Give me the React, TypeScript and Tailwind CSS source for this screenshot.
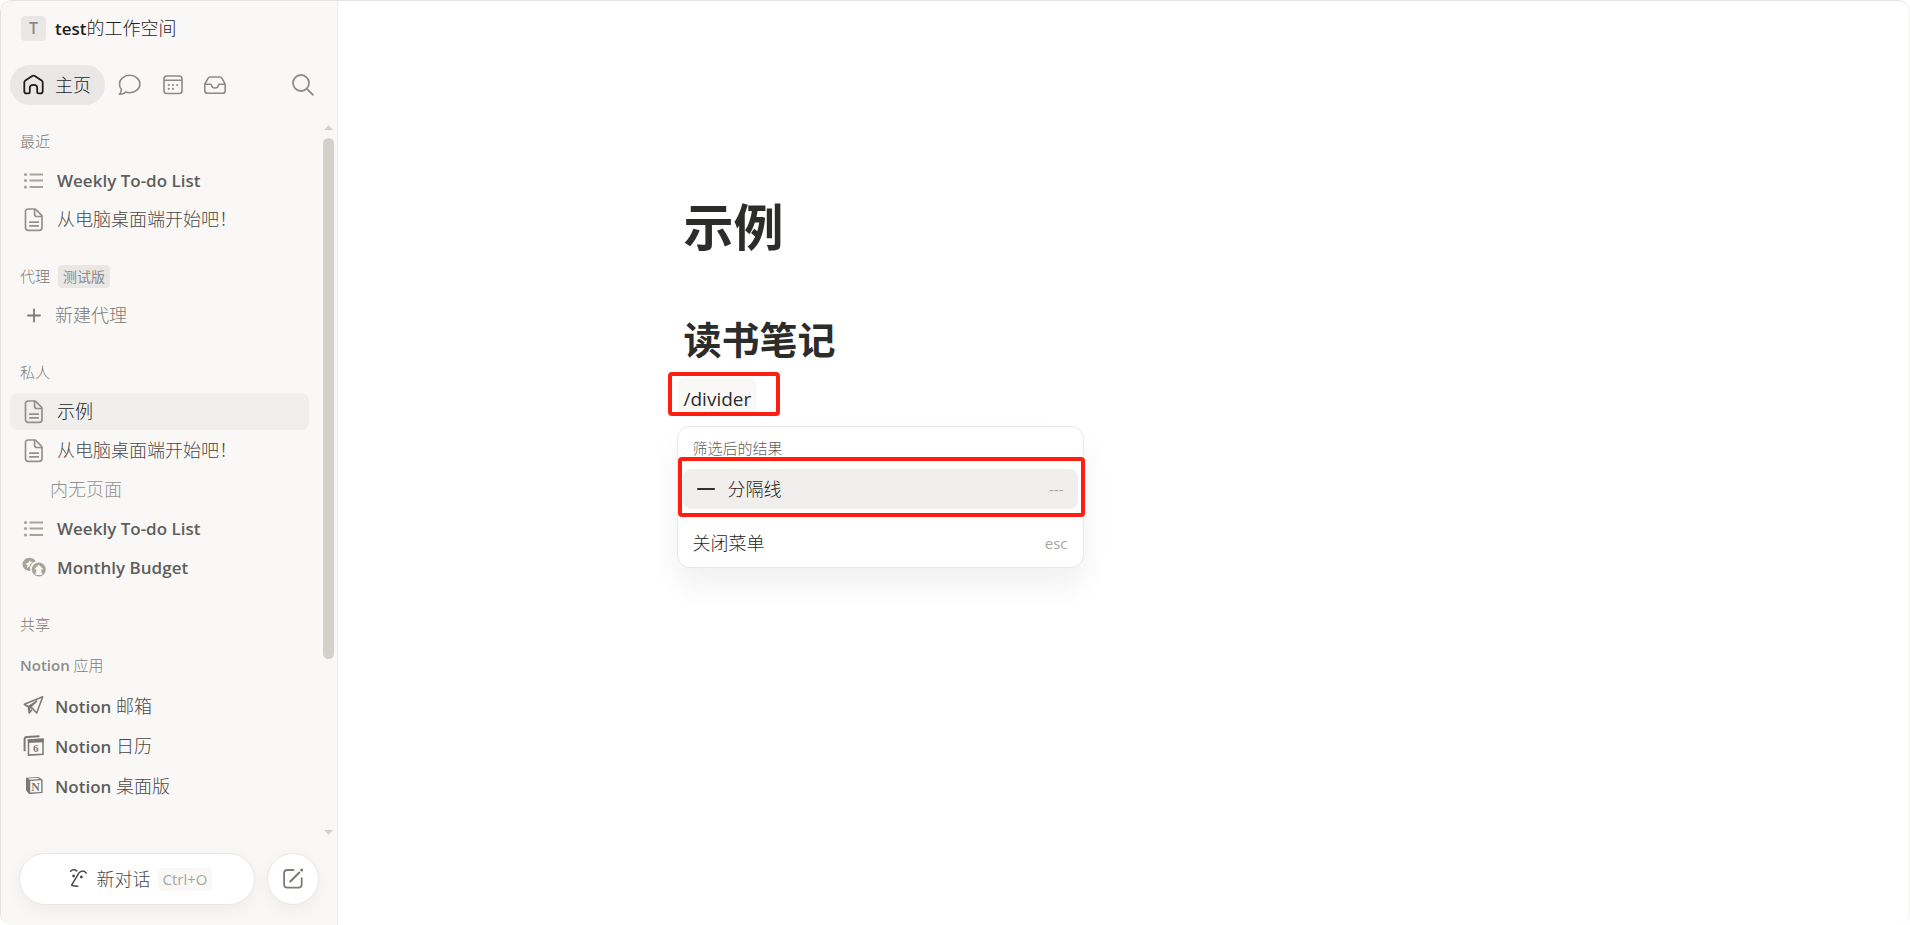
import React from 'react';

interface PageItem {
  name: string;
  icon: React.ReactNode;
  active?: boolean;
  latin?: boolean;
}

const HomeIcon = () => (
  <svg width="24" height="24" viewBox="0 0 24 24" fill="none" stroke="currentColor" strokeWidth="1.8" strokeLinejoin="round">
    <path d="M2.3 9.6c0-.9.4-1.6 1.1-2.1L10.2 3c.8-.5 1.8-.5 2.6 0l6.8 4.5c.7.5 1.1 1.2 1.1 2.1v8.600c0 1.300-.9 2.200-2.200 2.200h-2.200c-.7 0-1.100-.4-1.100-1.100v-4.500c0-1.900-1.300-3-3.700-3s-3.700 1.100-3.700 3v4.500c0 .7-.4 1.100-1.100 1.100H4.500c-1.300 0-2.200-.9-2.200-2.200z" />
  </svg>
);

const ChatIcon = () => (
  <svg width="24" height="24" viewBox="0 0 24 24" fill="none" stroke="currentColor" strokeWidth="1.6" strokeLinejoin="round">
    <path d="M12.7 2.3c5.7 0 10.2 3.8 10.2 8.7s-4.5 8.7-10.2 8.7c-1.4 0-2.7-.2-3.900-.6-1.600 1.500-3.700 2.300-6.400 2.200 1.300-1.400 2-3 2-4.700-1.200-1.500-1.900-3.500-1.900-5.600 0-4.900 4.500-8.700 10.200-8.700z" />
  </svg>
);

const CalendarIcon = () => (
  <svg width="24" height="24" viewBox="0 0 24 24" fill="none" stroke="currentColor" strokeWidth="1.6">
    <rect x="3" y="3" width="18" height="17.5" rx="2.8" />
    <path d="M3 7.300h18" />
    <g fill="currentColor" stroke="none">
      <circle cx="12" cy="12" r="1.1" />
      <circle cx="16.2" cy="12" r="1.1" />
      <circle cx="7.8" cy="15.8" r="1.1" />
      <circle cx="12" cy="15.8" r="1.1" />
      <circle cx="7.8" cy="12" r="1.1" />
    </g>
  </svg>
);

const InboxIcon = () => (
  <svg width="24" height="24" viewBox="0 0 24 24" fill="none" stroke="currentColor" strokeWidth="1.6" strokeLinejoin="round">
    <path d="M1.8 11.2 5 5.300c.5-.9 1.200-1.300 2.200-1.300h9.600c1 0 1.700.4 2.200 1.300l3.200 5.900v6.500c0 1.600-1 2.600-2.600 2.600H4.400c-1.600 0-2.600-1-2.600-2.600z" />
    <path d="M1.8 11.2h5.700c.6 0 .9.300 1 .9.300 1.800 1.600 2.900 3.500 2.900s3.200-1.100 3.500-2.900c.1-.6.4-.9 1-.9h5.700" />
  </svg>
);

const SearchIcon = () => (
  <svg width="24" height="24" viewBox="0 0 24 24" fill="none" stroke="currentColor" strokeWidth="1.8" strokeLinecap="round">
    <circle cx="10" cy="10" r="8" />
    <path d="m15.900 15.900 6 6" />
  </svg>
);

const ListIcon = () => (
  <svg width="24" height="24" viewBox="0 0 24 24" fill="none" stroke="#a8a499" strokeWidth="2.2">
    <path d="M7.500 5.500H21M7.500 11.500H21M7.500 18H21" />
    <g fill="#a8a499" stroke="none">
      <circle cx="3.500" cy="5.500" r="1.600" />
      <circle cx="3.500" cy="11.500" r="1.600" />
      <circle cx="3.500" cy="18" r="1.600" />
    </g>
  </svg>
);

const DocIcon = () => (
  <svg width="24" height="24" viewBox="0 0 24 24" fill="none" stroke="#91918e" strokeWidth="1.7" strokeLinejoin="round" strokeLinecap="round">
    <path d="M6.300 1h6c.8 0 1.400.2 1.900.8l5 5c.500.500.8 1.100.8 1.900v10.900c0 1.800-1 2.800-2.800 2.800H6.300c-1.800 0-2.800-1-2.800-2.800V3.800C3.500 2 4.500 1 6.300 1z" />
    <path d="M12.600 1.300v4.900c0 1.500.8 2.300 2.300 2.300h4.700M7.800 14.200h8.500M7.800 17.900h8.500" />
  </svg>
);

const PlusIcon = () => (
  <svg width="24" height="24" viewBox="0 0 24 24" fill="none" stroke="currentColor" strokeWidth="1.8" strokeLinecap="round">
    <path d="M12 5.500v12M6 11.500h12" />
  </svg>
);

const CoinsIcon = () => (
  <svg width="24" height="24" viewBox="0 0 24 24" fill="#a8a499">
    <path d="M7.600 1.700c2.800 0 5.100 1.500 6.200 3.700-3.300.7-5.600 3.400-5.600 6.800 0 .9.200 1.800.5 2.600-.4.100-.8.100-1.200.1C3.600 14.900.5 12 .5 8.300s3.200-6.600 7.100-6.600zM7.300 4.500 6.300 7l-2.800.5 2 1.900-.4 2.700 2.300-1.300.3-1.700 1.500-2.200 1.800-.9-2.300-.3z" fillRule="evenodd" />
    <path d="M16.800 6.500a7 7 0 1 1 0 14 7 7 0 0 1 0-14zm0 2.200-4.600 4.500h2v2.700c0 .4-.1.700-.4 1l-1 1c1.100.8 2.500 1.200 4 1.200s2.900-.4 4-1.200l-1-1c-.3-.3-.4-.6-.4-1v-2.700h2z" fillRule="evenodd" />
  </svg>
);

const MailIcon = () => (
  <svg width="24" height="24" viewBox="0 0 24 24" fill="none" stroke="currentColor" strokeWidth="1.5" strokeLinejoin="round">
    <path d="M2.300 10.300 20.700 2.800l-6 16.200-4.300-4.700-2.800-1z" />
    <path d="m2.300 10.300 4 2.400.9 6.400 3-3.500M6.300 12.700l8.400-5.600-7.300 7v4.600" />
  </svg>
);

const NotionCalendarIcon = () => (
  <svg width="24" height="24" viewBox="0 0 24 24">
    <path d="M2.600 17.200V5.300c0-1.600.6-2.300 2.200-2.400L17.500 2.200" fill="none" stroke="currentColor" strokeWidth="2" />
    <path d="M6.500 6 21 5.300v15l-14.500.8z" fill="none" stroke="currentColor" strokeWidth="1.5" />
    <path d="M5.800 5.200 21.700 4.600v3.600L5.800 8.900z" fill="currentColor" />
    <text x="13.800" y="18.300" textAnchor="middle" fontSize="11" fontWeight="700" fill="currentColor" className="font-['Liberation_Serif',serif]">6</text>
  </svg>
);

const NotionIcon = () => (
  <svg width="24" height="24" viewBox="0 0 24 24">
    <path d="M4 3.800 15.500 2.900c.7 0 1 .1 1.500.4l3.600 2.400v13.400L8 20.100c-.7 0-1-.1-1.400-.6L4 16.300z" fill="currentColor" />
    <path d="m5.700 4.500 9.900-.7 2 1.200-9.600.7zM8.200 6.900l11-.7v11.700l-11 .7z" fill="#f9f8f7" />
    <text x="13.700" y="16.500" textAnchor="middle" fontSize="12" fontWeight="700" fill="currentColor" className="font-['Liberation_Serif',serif]">N</text>
  </svg>
);

const FaceIcon = () => (
  <svg width="24" height="24" viewBox="0 0 24 24" fill="none" stroke="#4b4945" strokeWidth="1.5" strokeLinecap="round" strokeLinejoin="round">
    <path d="M4.600 4.200c1.700-1.900 4.400-2 6.100-.3M20.200 6.100c-1.200-2.700-5.200-3.100-7.400.1L5.600 18.200c2 .7 4.100.9 6.200 1" />
    <circle cx="7.600" cy="9" r="1.400" fill="#4b4945" stroke="none" />
    <circle cx="15.400" cy="10" r="1.400" fill="#4b4945" stroke="none" />
  </svg>
);

const ComposeIcon = () => (
  <svg width="24" height="24" viewBox="0 0 24 24" fill="none" stroke="currentColor" strokeWidth="1.8" strokeLinecap="round">
    <path d="M12.500 3H6.500C4.300 3 3.100 4.200 3.100 6.400v10.800c0 2.200 1.200 3.400 3.400 3.400h10.800c2.200 0 3.400-1.200 3.400-3.400v-6" />
    <path d="m9.300 14.500 9-9" strokeWidth="2" />
    <circle cx="20.700" cy="3.100" r="1.500" fill="currentColor" stroke="none" />
  </svg>
);

const recent: PageItem[] = [
  { name: 'Weekly To-do List', icon: <ListIcon />, latin: true },
  { name: '从电脑桌面端开始吧！', icon: <DocIcon /> },
];

const apps = [
  { label: '邮箱', icon: <MailIcon /> },
  { label: '日历', icon: <NotionCalendarIcon /> },
  { label: '桌面版', icon: <NotionIcon /> },
];

function SectionTitle({ children }: { children: React.ReactNode }) {
  return (
    <h2 className="flex h-[37px] items-center gap-2 px-[10px] text-[15px] font-light text-[#7d7a75]">
      {children}
    </h2>
  );
}

function PageLink({ item }: { item: PageItem }) {
  return (
    <a
      href="#"
      className={`flex h-[37px] items-center gap-[11px] rounded-lg px-3 whitespace-nowrap ${
        item.active ? 'bg-[#f0efed] text-[#1f1e1d]' : item.latin ? 'text-[#5f5e5b]' : 'text-[#494846]'
      } ${item.latin ? 'text-[17px] font-semibold' : 'text-[18px] font-light'}`}
    >
      {item.icon}
      {item.name}
    </a>
  );
}

function Sidebar() {
  return (
    <aside className="flex w-[337px] shrink-0 flex-col border-r border-[#eeedeb] bg-[#f9f8f7]">
      {/* 工作空间 */}
      <button className="flex h-[54px] items-center gap-[9px] pl-5 text-left text-[18px] font-light text-[#1f1e1d]">
        <span className="flex size-[25px] items-center justify-center rounded bg-[#e9e8e6] text-[16px] font-semibold text-[#8e8b86]">T</span>
        <span><span className="text-[17px] font-semibold">test</span>的工作空间</span>
      </button>

      {/* 导航栏 */}
      <nav className="mt-[10px] flex h-10 items-center pr-[22px] pl-[9px] text-[#8e8b86]">
        <a href="#" className="mr-3 flex h-10 items-center gap-[9px] rounded-full bg-[#e9e8e6] pr-[14px] pl-3 text-[18px] font-light text-[#1f1e1d]">
          <HomeIcon />
          主页
        </a>
        <button aria-label="聊天" className="mr-5"><ChatIcon /></button>
        <button aria-label="日历" className="mr-[18px]"><CalendarIcon /></button>
        <button aria-label="收件箱"><InboxIcon /></button>
        <button aria-label="搜索" className="ml-auto"><SearchIcon /></button>
      </nav>

      <div className="mt-[18px] flex grow">
        <div className="flex grow flex-col gap-5 pl-[9px]">
          <section className="flex flex-col gap-[2px]">
            <SectionTitle>最近</SectionTitle>
            {recent.map((item) => <PageLink key={item.name} item={item} />)}
          </section>

          <section className="flex flex-col gap-[2px]">
            <SectionTitle>
              代理
              <span className="rounded bg-[#e9e8e6] px-[5px] text-[14px] leading-[23px] font-normal text-[#8e8b86]">测试版</span>
            </SectionTitle>
            <button className="flex h-[37px] items-center gap-[9px] px-3 text-[18px] font-light text-[#7d7a75]">
              <PlusIcon />
              新建代理
            </button>
          </section>

          <section className="flex flex-col gap-[2px]">
            <SectionTitle>私人</SectionTitle>
            <PageLink item={{ name: '示例', icon: <DocIcon />, active: true }} />
            <PageLink item={{ name: '从电脑桌面端开始吧！', icon: <DocIcon /> }} />
            <p className="flex h-[37px] items-center pl-10 text-[18px] font-light text-[#91918e]">内无页面</p>
            <PageLink item={{ name: 'Weekly To-do List', icon: <ListIcon />, latin: true }} />
            <PageLink item={{ name: 'Monthly Budget', icon: <CoinsIcon />, latin: true }} />
          </section>

          <section className="flex flex-col gap-1">
            <SectionTitle>共享</SectionTitle>
            <SectionTitle>
              <span><span className="font-semibold text-[#8e8b86]">Notion</span> 应用</span>
            </SectionTitle>
            {apps.map((app) => (
              <a key={app.label} href="#" className="flex h-9 items-center gap-[9px] px-3 text-[18px] font-light text-[#494846]">
                <span className="text-[#7d7a75]">{app.icon}</span>
                <span><span className="text-[17px] font-semibold text-[#5f5e5b]">Notion</span> {app.label}</span>
              </a>
            ))}
          </section>
        </div>

        {/* 滚动条 */}
        <div className="ml-[14px] flex w-[14px] flex-col items-center pt-[2px] pr-[3px]">
          <svg width="9" height="5" viewBox="0 0 9 5" fill="#d3d1cb"><path d="M0 5 4.500 0 9 5z" /></svg>
          <div className="mt-2 w-[11px] grow-[521] rounded-full bg-[#d3d1cb]" />
          <div className="grow-[171]" />
          <svg width="9" height="5" viewBox="0 0 9 5" fill="#d3d1cb"><path d="M0 0h9L4.500 5z" /></svg>
        </div>
      </div>

      <div className="mt-[18px] mb-5 flex gap-3 px-[18px]">
        <button className="flex h-[52px] grow items-center justify-center gap-[7px] rounded-full border border-[#e9e8e6] bg-white pl-1 text-[18px] font-light text-[#494846] shadow-[0_5px_15px_rgba(0,0,0,0.05)]">
          <FaceIcon />
          新对话
          <kbd className="rounded bg-[#f9f8f7] px-[5px] font-[inherit] text-[15px] leading-[23px] font-medium text-[#a8a6a2]">Ctrl+O</kbd>
        </button>
        <button aria-label="新建页面" className="flex size-[52px] items-center justify-center rounded-full border border-[#e9e8e6] bg-white text-[#7d7a75] shadow-[0_5px_15px_rgba(0,0,0,0.05)]">
          <ComposeIcon />
        </button>
      </div>
    </aside>
  );
}

function SlashMenu() {
  return (
    <div className="absolute top-12 -left-[7px] w-[407px] rounded-[13px] border border-[#e9e8e6] bg-white pb-1 shadow-[0_18px_30px_rgba(0,0,0,0.06)]">
      <p className="px-[15px] pt-[7px] text-[15px] leading-[28px] font-light text-[#5f5e5b]">筛选后的结果</p>
      <div className="relative mt-[7px] px-[5px]">
        <button className="flex h-10 w-full items-center rounded-lg bg-[#f0efed] px-[14px] text-[18px] font-light text-[#1f1e1d]">
          <svg width="18" height="2" viewBox="0 0 18 2" fill="#32302c"><rect width="18" height="2" rx="1" /></svg>
          <span className="ml-[13px]">分隔线</span>
          <span className="ml-auto text-[15px] font-normal text-[#a8a6a2]">---</span>
        </button>
        <div className="pointer-events-none absolute -top-3 -right-[2px] left-0 h-[60px] rounded border-4 border-[#ff1e10]" />
      </div>
      <button className="mt-[14px] flex h-10 w-full items-center justify-between px-[15px] text-[18px] font-light text-[#1f1e1d]">
        关闭菜单
        <span className="text-[15px] font-normal text-[#a8a6a2]">esc</span>
      </button>
    </div>
  );
}

export default function App() {
  return (
    <div className="flex min-h-screen overflow-hidden rounded-xl border border-b-0 border-[#e3e3e2] border-r-[#f3f3f2] bg-white font-['Open_Sans','Noto_Sans_CJK_SC',sans-serif]">
      <Sidebar />

      {/* 正文 */}
      <main className="grow">
        <div className="mx-auto max-w-[880px] pt-[196px] text-[#2c2c2b]">
          <h1 className="text-[50px] leading-[60px] font-bold">示例</h1>
          <h2 className="mt-[57px] text-[38px] leading-[50px] font-bold">读书笔记</h2>
          <div className="relative mt-[14px] h-[37px]">
            <span className="-ml-[6px] inline-block rounded-lg bg-[#f9f8f7] px-[6px] pt-[3px] text-[19px] leading-[36px]">/divider</span>
            <div className="pointer-events-none absolute -top-[6px] -left-4 h-11 w-28 rounded border-4 border-[#ff1e10]" />
            <SlashMenu />
          </div>
        </div>
      </main>
    </div>
  );
}
